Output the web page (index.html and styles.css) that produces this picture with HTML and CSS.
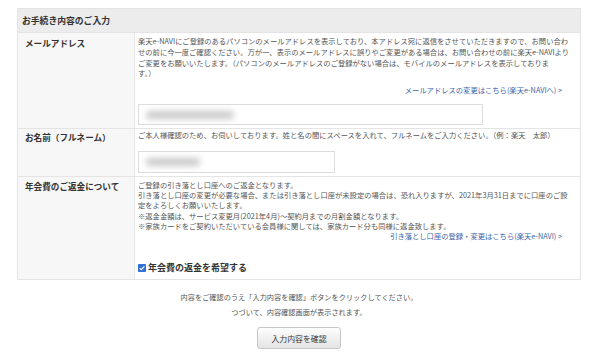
FILE: index.html
```html
<!DOCTYPE html>
<html lang="ja">
<head>
    <meta charset="UTF-8">
    <meta name="viewport" content="width=device-width, initial-scale=1.0">
    <title>お手続き内容のご入力</title>
    <link rel="stylesheet" href="styles.css">
</head>
<body>
    <div class="page">
        <table class="form-table">
            <colgroup>
                <col class="col-label">
                <col class="col-value">
            </colgroup>
            <tr>
                <th class="caption" colspan="2">お手続き内容のご入力</th>
            </tr>
            <tr class="row-mail">
                <th class="label">メールアドレス</th>
                <td class="value">
                    <p class="note">楽天e-NAVIにご登録のあるパソコンのメールアドレスを表示しており、本アドレス宛に返信をさせていただきますので、お問い合わ<br>せの前に今一度ご確認ください。万が一、表示のメールアドレスに誤りやご変更がある場合は、お問い合わせの前に楽天e-NAVIよりご変更をお願いいたします。（パソコンのメールアドレスのご登録がない場合は、モバイルのメールアドレスを表示しておりま<br>す。）</p>
                    <div class="more"><a href="#">メールアドレスの変更はこちら(楽天e-NAVIへ) &gt;</a></div>
                    <div class="field field-mail"><span class="masked masked-mail"></span></div>
                </td>
            </tr>
            <tr class="row-name">
                <th class="label">お名前（フルネーム）</th>
                <td class="value">
                    <p class="note">ご本人様確認のため、お伺いしております。姓と名の間にスペースを入れて、フルネームをご入力ください。（例：楽天　太郎）</p>
                    <div class="field field-name"><span class="masked masked-name"></span></div>
                </td>
            </tr>
            <tr class="row-refund">
                <th class="label">年会費のご返金について</th>
                <td class="value">
                    <p class="note">ご登録の引き落とし口座へのご返金となります。<br>
                    引き落とし口座の変更が必要な場合、または引き落とし口座が未設定の場合は、恐れ入りますが、2021年3月31日までに口座のご設定をよろしくお願いいたします。<br>
                    ※返金金額は、サービス変更月(2021年4月)～契約月までの月割金額となります。<br>
                    ※家族カードをご契約いただいている会員様に関しては、家族カード分も同様に返金致します。</p>
                    <div class="more"><a href="#">引き落とし口座の登録・変更はこちら(楽天e-NAVI) &gt;</a></div>
                    <label class="check">
                        <svg class="check-box" width="8" height="8" viewBox="0 0 8 8">
                            <rect x="0" y="0" width="8" height="8" rx="1" fill="#2f6fd6"/>
                            <path d="M1.6 4.1 L3.3 5.7 L6.4 2.3" fill="none" stroke="#fff" stroke-width="1.2"/>
                        </svg>
                        年会費の返金を希望する
                    </label>
                </td>
            </tr>
        </table>

        <p class="guide">内容をご確認のうえ「入力内容を確認」ボタンをクリックしてください。<br>つづいて、内容確認画面が表示されます。</p>
        <div class="actions">
            <button type="button">入力内容を確認</button>
        </div>
    </div>
</body>
</html>
```

FILE: styles.css
```css
body {
    margin: 0;
    font-family: "Noto Sans CJK JP", "Noto Sans", sans-serif;
    color: #444;
    background: #fff;
}
.page {
    padding: 8px 0 0 17px;
    width: 564px;
}
.form-table {
    width: 564px;
    border-collapse: collapse;
    table-layout: fixed;
}
.col-label {
    width: 117px;
}
.form-table th,
.form-table td {
    border: 1px solid #e4e4e4;
}
.caption {
    height: 23px;
    padding: 0 0 0 4px;
    background: #ececec;
    text-align: left;
    font-size: 8.8px;
    font-weight: bold;
    color: #333;
}
.label {
    padding: 6px 0 0 7px;
    vertical-align: top;
    text-align: left;
    background: #f7f7f7;
    font-size: 8.6px;
    line-height: 12px;
    font-weight: bold;
    color: #333;
    white-space: nowrap;
}
.value {
    padding: 3px 8px 3px 3px;
    vertical-align: top;
}
.note {
    margin: 0;
    font-size: 7.3px;
    line-height: 10.8px;
    color: #555;
}
.more {
    margin-top: 6px;
    padding-right: 10px;
    text-align: right;
    font-size: 7.3px;
    line-height: 10.8px;
}
.more a {
    color: #3a64a8;
    text-decoration: none;
}
.field {
    box-sizing: border-box;
    height: 21px;
    border: 1px solid #dcdcdc;
    background: #fff;
    padding: 6px 0 0 7px;
}
.field-mail {
    margin-top: 8px;
    width: 345px;
}
.field-name {
    margin-top: 10px;
    width: 197px;
    height: 22px;
}
.masked {
    display: block;
    height: 8px;
    background: #c9c9c9;
    border-radius: 4px;
    filter: blur(3px);
}
.masked-mail {
    width: 88px;
}
.masked-name {
    width: 54px;
}

.row-mail .label {
    padding-top: 4px;
}
.row-name .label {
    padding-top: 2px;
}
.row-name .value {
    padding-top: 1px;
}
.row-refund .label {
    padding-top: 3px;
}
.row-refund .note {
    line-height: 10.3px;
}
.row-refund .more {
    margin-top: 0;
}
.row-refund .value {
    padding-bottom: 5px;
}
.check {
    display: flex;
    align-items: center;
    gap: 2px;
    margin-top: 20px;
    font-size: 9px;
    line-height: 12px;
    font-weight: bold;
    color: #333;
}
.check-box {
    flex: none;
}

.guide {
    margin: 10px 0 0;
    text-align: center;
    font-size: 7.2px;
    line-height: 15px;
    color: #555;
}
.actions {
    margin-top: 7px;
}
button {
    display: block;
    margin: 0 auto;
    width: 84px;
    height: 22px;
    padding: 0;
    border: 1px solid #c6c6c6;
    border-radius: 3px;
    background: linear-gradient(#fdfdfd, #e4e4e4);
    font-family: "Noto Sans CJK JP", sans-serif;
    font-size: 7.9px;
    color: #333;
    cursor: pointer;
}
```
